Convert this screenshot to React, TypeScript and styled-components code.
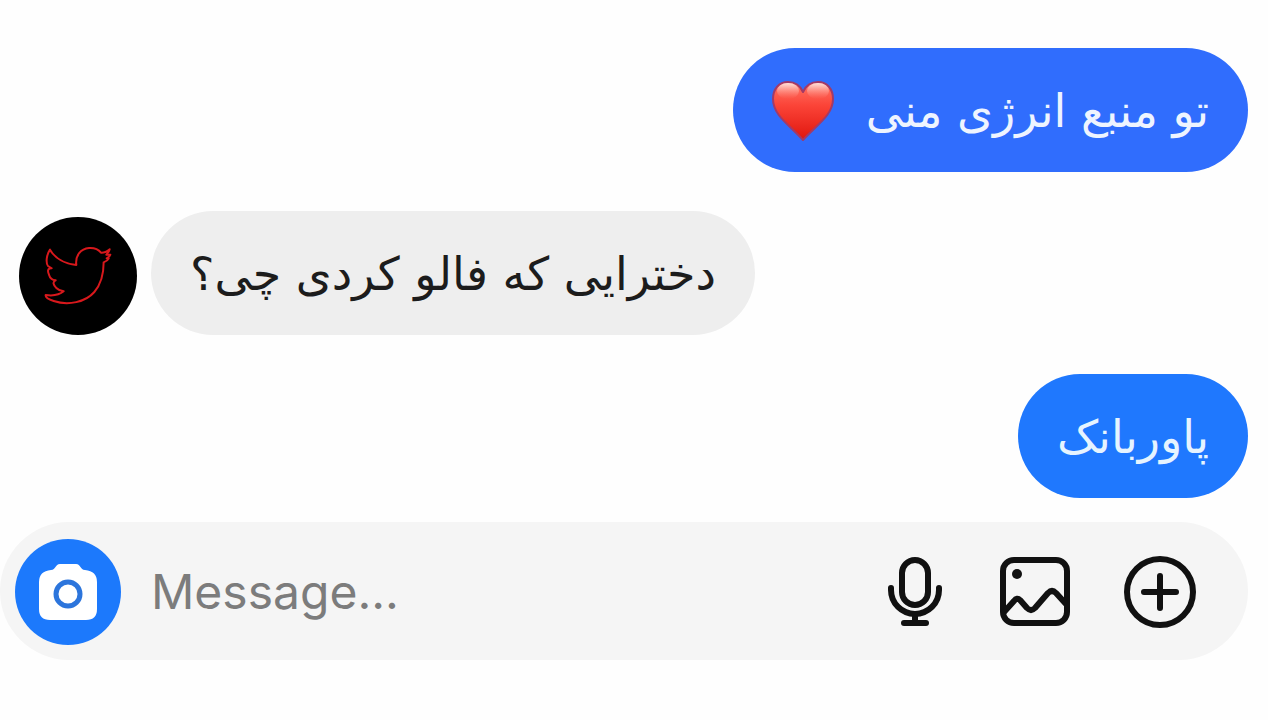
import React from "react";
import styled, { createGlobalStyle } from "styled-components";

const GlobalStyle = createGlobalStyle`
  *, *::before, *::after { box-sizing: border-box; }
  body { margin: 0; background: #fefefe; }
`;

const Chat = styled.main`
  display: flex;
  flex-direction: column;
  gap: 24px;
  padding: 48px 20px 60px 0;
  font-family: "DejaVu Sans", sans-serif;
`;

const Thread = styled.section`
  display: flex;
  flex-direction: column;
  gap: 39px;
  padding-left: 19px;
`;

const MessageRow = styled.div<{ $own?: boolean }>`
  display: flex;
  align-items: flex-end;
  justify-content: ${(p) => (p.$own ? "flex-end" : "flex-start")};
  gap: 14px;
`;

const Bubble = styled.p<{ $fill: string; $ink: string }>`
  display: flex;
  align-items: center;
  gap: 32px;
  margin: 0;
  min-height: 124px;
  padding: 2px 39px 0;
  border-radius: 62px;
  background: ${(p) => p.$fill};
  color: ${(p) => p.$ink};
  font-size: 46px;
  line-height: 60px;
`;

const Avatar = styled.svg`
  display: block;
  flex: none;
  width: 118px;
  height: 118px;
`;

const HeartIcon = styled.svg`
  display: block;
  flex: none;
  width: 62px;
  height: 62px;
`;

const Composer = styled.form`
  display: flex;
  align-items: center;
  gap: 30px;
  padding: 17px 52px 15px 15px;
  border-radius: 69px;
  background: #f5f5f5;
`;

const CameraButton = styled.button`
  flex: none;
  display: grid;
  place-items: center;
  width: 106px;
  height: 106px;
  padding: 0;
  border: 0;
  border-radius: 50%;
  background: #1c79fc;
`;

const MessageInput = styled.input`
  flex: 1;
  min-width: 0;
  padding: 0;
  border: 0;
  outline: 0;
  background: transparent;
  color: #161616;
  font-family: Inter, sans-serif;
  font-size: 48px;
  line-height: 60px;
  &::placeholder { color: #7c7c7c; opacity: 1; }
`;

const Actions = styled.div`
  display: flex;
  align-items: center;
  gap: 54px;
`;

const IconButton = styled.button`
  display: block;
  padding: 0;
  border: 0;
  background: transparent;
  color: #111;
  svg { display: block; }
`;

function Bird() {
  return (
    <Avatar viewBox="0 0 354 354" role="img" aria-label="Avatar">
      <circle cx="177" cy="177" r="177" fill="#000" />
      <path
        d="M93 98C82 114 80 138 87 147L98 154C84 154 86 164 90 173C93 184 100 189 110 190C99 194 104 206 112 213C118 219 126 222 134 223C120 235 102 237 80 234C78 242 92 248 104 252C148 267 200 255 226 225C246 202 254 168 254 136C262 133 267 129 269 125L263 124C268 121 273 117 274 113L262 113C267 108 271 103 272 97C264 103 254 108 246 107C238 97 224 92 210 93C186 95 168 115 172 144C138 141 108 124 93 98Z"
        fill="none"
        stroke="#d8181c"
        strokeWidth="6"
        strokeLinejoin="round"
      />
    </Avatar>
  );
}

function Heart() {
  return (
    <HeartIcon viewBox="0 0 62 62" role="img" aria-label="Heart">
      <defs>
        <linearGradient id="heartFill" x1="0" y1="0" x2="0" y2="1">
          <stop offset="0" stopColor="#ff7668" />
          <stop offset="0.4" stopColor="#fb4438" />
          <stop offset="1" stopColor="#e0160e" />
        </linearGradient>
        <linearGradient id="heartShine" x1="0" y1="0" x2="0" y2="1">
          <stop offset="0" stopColor="#ffe9e4" stopOpacity="0.95" />
          <stop offset="1" stopColor="#ff8a7c" stopOpacity="0" />
        </linearGradient>
      </defs>
      <path
        d="M31 12C28 5 22 2 16 2C7 2 1 9 1 19C1 36 19 46 31 60C43 46 61 36 61 19C61 9 55 2 46 2C40 2 34 5 31 12Z"
        fill="url(#heartFill)"
        stroke="#a23a68"
        strokeWidth="2"
        strokeLinejoin="round"
      />
      <ellipse cx="16" cy="11" rx="11" ry="8" fill="url(#heartShine)" />
      <ellipse cx="46" cy="11" rx="11" ry="8" fill="url(#heartShine)" />
    </HeartIcon>
  );
}

function CameraIcon() {
  return (
    <svg width="60" height="58" viewBox="0 0 60 58" aria-hidden="true">
      <path
        d="M13 7C18 7 17 1 22 1H38C43 1 42 7 47 7Q59 8 59 19V46Q59 57 48 57H12Q1 57 1 46V19Q1 8 13 7Z"
        fill="#fff"
      />
      <circle cx="30" cy="31" r="12" fill="none" stroke="#2c75dc" strokeWidth="5" />
    </svg>
  );
}

function MicIcon() {
  return (
    <svg width="60" height="72" viewBox="0 0 60 72" fill="none" stroke="currentColor" strokeWidth="6" strokeLinecap="round" aria-hidden="true">
      <rect x="16" y="4" width="26" height="45" rx="13" />
      <path d="M5 32V34A24 24 0 0 0 53 34V32M29 58V67" />
      <path d="M18 67H40" />
    </svg>
  );
}

function PictureIcon() {
  return (
    <svg width="70" height="72" viewBox="0 0 70 72" fill="none" stroke="currentColor" strokeWidth="6" strokeLinejoin="round" aria-hidden="true">
      <rect x="3" y="4" width="64" height="63" rx="11" />
      <circle cx="17" cy="18" r="5" fill="currentColor" stroke="none" />
      <path d="M4 56L14 45Q17 41 20 44L27 52Q31 56 35 52L48 37Q52 33 56 37L66 48" />
    </svg>
  );
}

function PlusIcon() {
  return (
    <svg width="72" height="72" viewBox="0 0 72 72" fill="none" stroke="currentColor" strokeWidth="6" strokeLinecap="round" aria-hidden="true">
      <circle cx="36" cy="36" r="33" />
      <path d="M36 20V52M20 36H52" />
    </svg>
  );
}

export default function App() {
  return (
    <>
      <GlobalStyle />
      <Chat>
        <Thread>
          <MessageRow $own>
            <Bubble dir="rtl" lang="fa" $fill="#306dfd" $ink="#eef4ff">
              <span>تو منبع انرژی منی</span>
              <Heart />
            </Bubble>
          </MessageRow>
          <MessageRow>
            <Bird />
            <Bubble dir="rtl" lang="fa" $fill="#eeeeee" $ink="#1c1c1c">
              دخترایی که فالو کردی چی؟
            </Bubble>
          </MessageRow>
          <MessageRow $own>
            <Bubble dir="rtl" lang="fa" $fill="#1f78fe" $ink="#e6f4ff">
              پاوربانک
            </Bubble>
          </MessageRow>
        </Thread>
        <Composer onSubmit={(e) => e.preventDefault()}>
          <CameraButton type="button" aria-label="Camera">
            <CameraIcon />
          </CameraButton>
          <MessageInput type="text" placeholder="Message..." aria-label="Message" />
          <Actions>
            <IconButton type="button" aria-label="Record voice">
              <MicIcon />
            </IconButton>
            <IconButton type="button" aria-label="Send picture">
              <PictureIcon />
            </IconButton>
            <IconButton type="button" aria-label="More">
              <PlusIcon />
            </IconButton>
          </Actions>
        </Composer>
      </Chat>
    </>
  );
}
